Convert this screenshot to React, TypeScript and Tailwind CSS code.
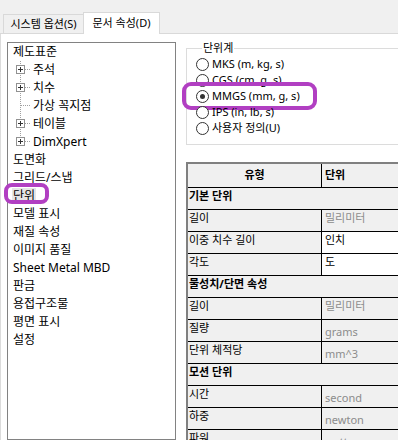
import React from "react"

type TreeItem = { label: string; child?: boolean; expander?: boolean; selected?: boolean }

const treeItems: TreeItem[] = [
  { label: "제도표준" },
  { label: "주석", child: true, expander: true },
  { label: "치수", child: true, expander: true },
  { label: "가상 꼭지점", child: true },
  { label: "테이블", child: true, expander: true },
  { label: "DimXpert", child: true, expander: true },
  { label: "도면화" },
  { label: "그리드/스냅" },
  { label: "단위", selected: true },
  { label: "모델 표시" },
  { label: "재질 속성" },
  { label: "이미지 품질" },
  { label: "Sheet Metal MBD" },
  { label: "판금" },
  { label: "용접구조물" },
  { label: "평면 표시" },
  { label: "설정" },
]

const radios = [
  { label: "MKS (m, kg, s)" },
  { label: "CGS (cm, g, s)" },
  { label: "MMGS  (mm, g, s)", checked: true },
  { label: "IPS (in, lb, s)" },
  { label: "사용자 정의(U)" },
]

type Row =
  | { group: string }
  | { name: string; value: string; editable?: boolean; latin?: boolean }

const rows: Row[] = [
  { group: "기본 단위" },
  { name: "길이", value: "밀리미터" },
  { name: "이중 치수 길이", value: "인치", editable: true },
  { name: "각도", value: "도", editable: true },
  { group: "물성치/단면 속성" },
  { name: "길이", value: "밀리미터" },
  { name: "질량", value: "grams", latin: true },
  { name: "단위 체적당", value: "mm^3", latin: true },
  { group: "모션 단위" },
  { name: "시간", value: "second", latin: true },
  { name: "하중", value: "newton", latin: true },
  { name: "파워", value: "watt", latin: true },
]

function Connector({ expander, last }: { expander?: boolean; last?: boolean }) {
  return (
    <svg width="24" height="18" className="shrink-0">
      <line x1="12.5" y1="0" x2="12.5" y2={last ? 9 : 18} stroke="#a0a0a0" strokeDasharray="1 1" />
      <line x1={expander ? 17 : 13} y1="8.5" x2="23" y2="8.5" stroke="#a0a0a0" strokeDasharray="1 1" />
      {expander && (
        <>
          <rect x="8.5" y="4.5" width="8" height="8" fill="white" stroke="#919191" />
          <line x1="10" y1="8.5" x2="15" y2="8.5" stroke="#333" />
          <line x1="12.5" y1="6" x2="12.5" y2="11" stroke="#333" />
        </>
      )}
    </svg>
  )
}

export default function App() {
  return (
    <div className="h-[440px] w-[398px] overflow-hidden bg-white font-['Noto_Sans','Noto_Sans_CJK_KR',sans-serif] text-black">
      {/* tabs */}
      <div className="flex h-[34px] items-end border-b border-[#d9d9d9] bg-[#f0f0f0] pl-[3px]">
        <div className="flex h-[19px] w-[80px] items-center justify-center border border-r-0 border-b-0 border-[#d9d9d9] text-[11px]">
          시스템 옵션(S)
        </div>
        <div className="-mb-px flex h-[22px] w-[77px] items-center justify-center border border-b-0 border-[#d9d9d9] bg-white text-[11px]">
          문서 속성(D)
        </div>
      </div>

      <div className="flex h-[406px] border-l border-[#dcdcdc]">
        {/* tree */}
        <div className="pl-[6px] pt-[8px]">
          <div className="h-full w-[169px] border border-[#828282] text-[12px]">
            {treeItems.map((it, i) => (
              <div key={i} className="relative flex h-[18px] items-center">
                {it.child ? (
                  <Connector expander={it.expander} last={it.label === "DimXpert"} />
                ) : (
                  <span className="w-[4px] shrink-0" />
                )}
                <span className={"px-[1px] leading-[16px] " + (it.selected ? "bg-[#e5e5e5]" : "")}>{it.label}</span>
                {it.selected && (
                  <span className="absolute left-[-4px] top-[-4px] h-[21px] w-[45px] rounded-[8px] border-[4px] border-[#b13fc2]" />
                )}
              </div>
            ))}
          </div>
        </div>

        {/* right side */}
        <div className="ml-[10px] flex flex-1 flex-col pr-[1px] pt-[6px]">
          <fieldset className="border border-[#dcdcdc] pb-[8px] pl-[9px]">
            <legend className="ml-[6px] px-[1px] text-[11px] leading-[16px]">단위계</legend>
            {radios.map((r, i) => (
              <div key={i} className="relative flex h-[16px] items-center gap-[3px] text-[11px]">
                <span className="flex h-[13px] w-[13px] items-center justify-center rounded-full border border-[#333] bg-white">
                  {r.checked && <span className="h-[5px] w-[5px] rounded-full bg-[#333]" />}
                </span>
                <span>{r.label}</span>
                {r.checked && (
                  <span className="absolute left-[-14px] top-[-6px] h-[28px] w-[135px] rounded-[9px] border-[4px] border-[#b13fc2]" />
                )}
              </div>
            ))}
          </fieldset>

          {/* unit table */}
          <div className="mt-[17px] w-[260px] border-l-2 border-t-2 border-[#808080] text-[11px]">
            <div className="flex h-[24px] border-b border-black bg-[#f0f0f0] font-bold">
              <div className="flex w-[134px] items-center justify-center border-r border-black">유형</div>
              <div className="flex flex-1 items-center pl-[3px]">단위</div>
            </div>
            {rows.map((r, i) =>
              "group" in r ? (
                <div key={i} className="h-[22px] border-b border-black bg-[#f0f0f0] pl-[1px] font-bold leading-[15px]">
                  {r.group}
                </div>
              ) : (
                <div key={i} className="flex h-[22px] border-b border-black">
                  <div className="w-[134px] border-r border-black bg-[#f0f0f0] pl-[1px] leading-[15px]">{r.name}</div>
                  <div
                    className={
                      "flex-1 pl-[3px] leading-[15px] " +
                      (r.editable ? "bg-white text-black" : "bg-[#f0f0f0] text-[#8c8c8c]") +
                      (r.latin ? " pt-[4px]" : "")
                    }
                  >
                    {r.value}
                  </div>
                </div>
              )
            )}
          </div>
        </div>
      </div>
    </div>
  )
}
